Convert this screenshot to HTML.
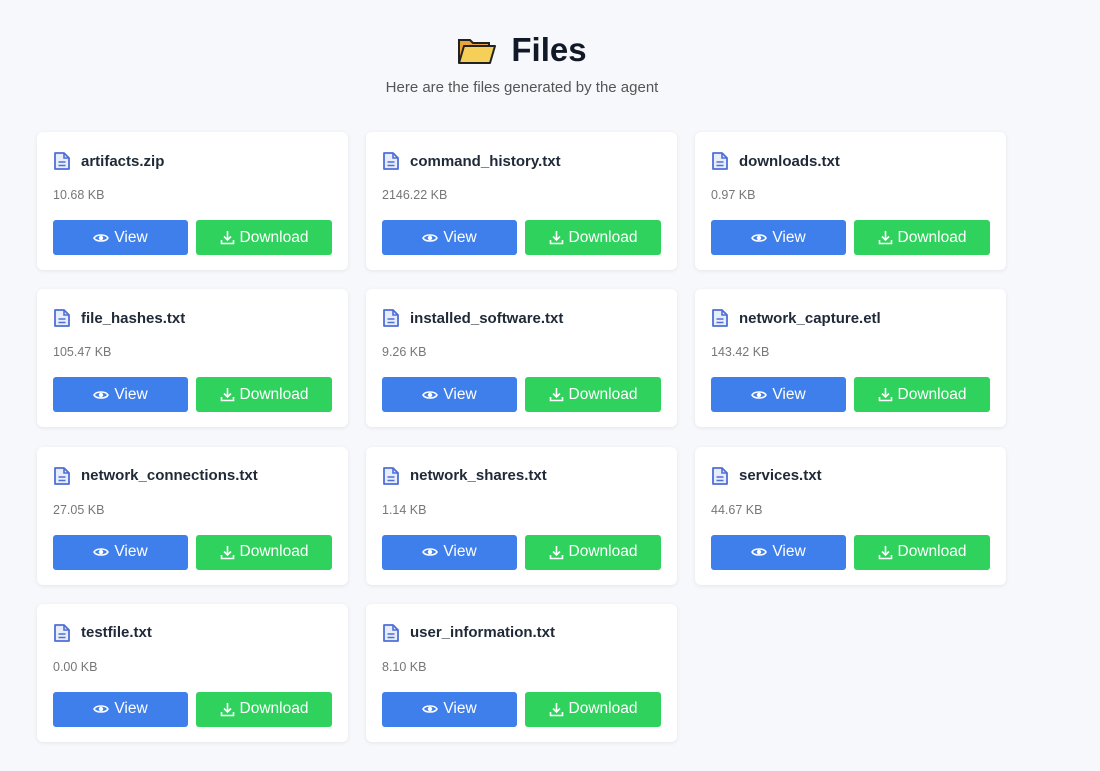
<!DOCTYPE html>
<html><head><style>
body{margin:0;background:#f7f8fc;font-family:"Liberation Sans",sans-serif;width:1100px;height:771px;overflow:hidden}
h1{position:absolute;top:28px;left:0;width:1044px;text-align:center;margin:0;font-size:33px;font-weight:bold;color:#111827;line-height:44px}
h1 svg{vertical-align:-5px;margin-right:14px}
.sub{position:absolute;top:79px;left:0;width:1044px;text-align:center;color:#555;font-size:15px}
.card{position:absolute;width:311px;height:138px;background:#fff;border-radius:6px;box-shadow:0 1px 4px rgba(0,0,0,.08)}
.name{position:absolute;left:16px;top:19px;font-size:15px;font-weight:bold;color:#1f2937;display:flex;align-items:center}
.name svg{margin-right:10px}
.size{position:absolute;left:16px;top:56px;font-size:12.5px;color:#777}
.btn{position:absolute;top:88px;height:35px;border-radius:3px;color:#fff;font-size:15.5px;display:flex;align-items:center;justify-content:center}
.v{left:16px;width:135px;background:#3f7fec}
.d{left:159px;width:136px;background:#2fd25c}
.btn svg{margin-right:5px}
</style></head><body>
<h1><svg width="40" height="30" viewBox="0 0 40 30"><path d="M2 4h11l3 3h16v19H2z" fill="#e8a33a" stroke="#222" stroke-width="2"/><path d="M7 10h31l-5 17H2z" fill="#f6cf58" stroke="#222" stroke-width="2" stroke-linejoin="round"/></svg>Files</h1>
<div class="sub">Here are the files generated by the agent</div>
<div id="c"></div>
<script>
var f=[["artifacts.zip","10.68 KB"],["command_history.txt","2146.22 KB"],["downloads.txt","0.97 KB"],["file_hashes.txt","105.47 KB"],["installed_software.txt","9.26 KB"],["network_capture.etl","143.42 KB"],["network_connections.txt","27.05 KB"],["network_shares.txt","1.14 KB"],["services.txt","44.67 KB"],["testfile.txt","0.00 KB"],["user_information.txt","8.10 KB"]];
var ic='<svg width="18" height="20" viewBox="0 0 18 20"><path d="M2 2h9l5 5v11H2z" fill="#e8edfb" stroke="#4f6fd6" stroke-width="1.8" stroke-linejoin="round"/><path d="M11 2v5h5M5.5 11h7M5.5 14.5h7" stroke="#4f6fd6" stroke-width="1.6" fill="none"/></svg>';
var eye='<svg width="16" height="12" viewBox="0 0 16 12"><path d="M1 6C3 2 13 2 15 6C13 10 3 10 1 6z" fill="none" stroke="#fff" stroke-width="1.6"/><circle cx="8" cy="6" r="2.2" fill="#fff"/></svg>';
var dl='<svg width="15" height="15" viewBox="0 0 15 15"><path d="M7.5 1v9M4 6.5l3.5 3.5 3.5-3.5M1.5 10v3.5h12V10" fill="none" stroke="#fff" stroke-width="1.6"/></svg>';
var h='';f.forEach(function(x,i){var l=37+(i%3)*329,t=132+Math.floor(i/3)*157.3;
h+='<div class="card" style="left:'+l+'px;top:'+t+'px"><div class="name">'+ic+x[0]+'</div><div class="size">'+x[1]+'</div><div class="btn v">'+eye+'View</div><div class="btn d">'+dl+'Download</div></div>';});
document.getElementById('c').innerHTML=h;
</script>
</body></html>
